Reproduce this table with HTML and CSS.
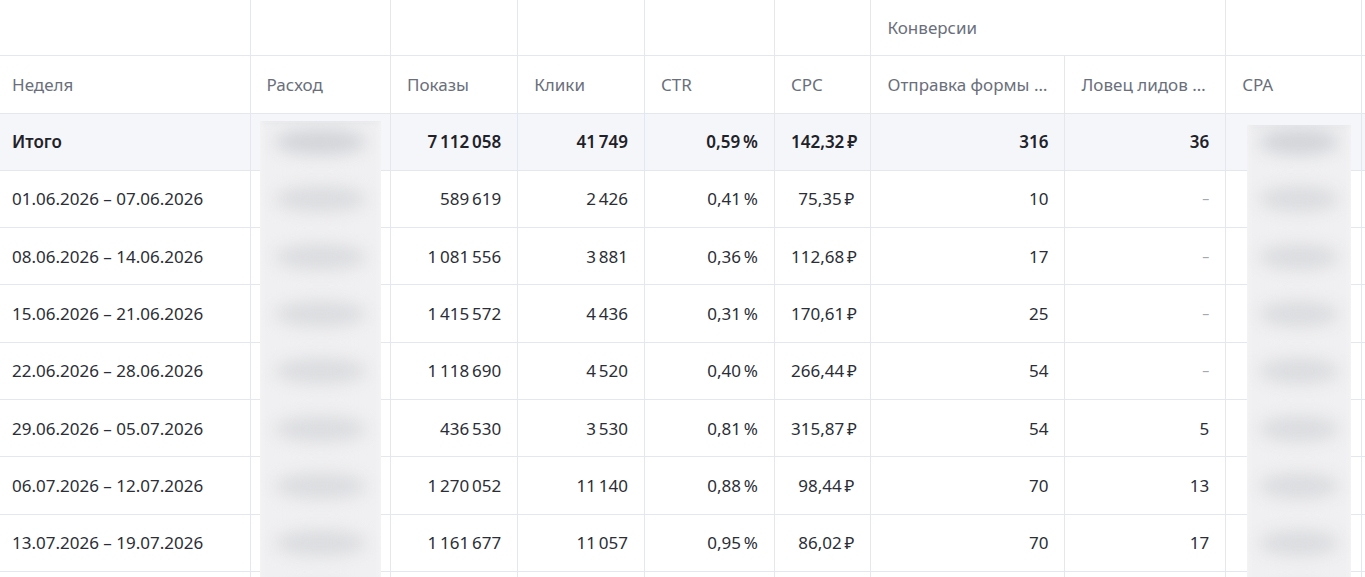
FILE: index.html
```html
<!DOCTYPE html>
<html lang="ru">
<head>
<meta charset="utf-8">
<title>Статистика по неделям</title>
<link rel="stylesheet" href="styles.css">
</head>
<body>
<div class="report">
  <table class="stats">
    <colgroup>
      <col class="c-week"><col class="c-spend"><col class="c-shows"><col class="c-clicks"><col class="c-ctr"><col class="c-cpc"><col class="c-form"><col class="c-leads"><col class="c-cpa"><col class="c-rest">
    </colgroup>
    <thead>
      <tr class="group">
        <th></th><th></th><th></th><th></th><th></th><th></th>
        <th colspan="2">Конверсии</th>
        <th></th><th></th>
      </tr>
      <tr class="head">
        <th>Неделя</th><th>Расход</th><th>Показы</th><th>Клики</th><th>CTR</th><th>CPC</th><th>Отправка формы …</th><th>Ловец лидов …</th><th>CPA</th><th></th>
      </tr>
    </thead>
    <tbody>
      <tr class="total">
        <td>Итого</td><td></td><td class="num">7&#8239;112&#8239;058</td><td class="num">41&#8239;749</td><td class="num">0,59&#8239;%</td><td class="num">142,32&#8239;₽</td><td class="num">316</td><td class="num">36</td><td></td><td></td>
      </tr>
      <tr>
        <td>01.06.2026 – 07.06.2026</td><td></td><td class="num">589&#8239;619</td><td class="num">2&#8239;426</td><td class="num">0,41&#8239;%</td><td class="num">75,35&#8239;₽</td><td class="num">10</td><td class="num empty">–</td><td></td><td></td>
      </tr>
      <tr>
        <td>08.06.2026 – 14.06.2026</td><td></td><td class="num">1&#8239;081&#8239;556</td><td class="num">3&#8239;881</td><td class="num">0,36&#8239;%</td><td class="num">112,68&#8239;₽</td><td class="num">17</td><td class="num empty">–</td><td></td><td></td>
      </tr>
      <tr>
        <td>15.06.2026 – 21.06.2026</td><td></td><td class="num">1&#8239;415&#8239;572</td><td class="num">4&#8239;436</td><td class="num">0,31&#8239;%</td><td class="num">170,61&#8239;₽</td><td class="num">25</td><td class="num empty">–</td><td></td><td></td>
      </tr>
      <tr>
        <td>22.06.2026 – 28.06.2026</td><td></td><td class="num">1&#8239;118&#8239;690</td><td class="num">4&#8239;520</td><td class="num">0,40&#8239;%</td><td class="num">266,44&#8239;₽</td><td class="num">54</td><td class="num empty">–</td><td></td><td></td>
      </tr>
      <tr>
        <td>29.06.2026 – 05.07.2026</td><td></td><td class="num">436&#8239;530</td><td class="num">3&#8239;530</td><td class="num">0,81&#8239;%</td><td class="num">315,87&#8239;₽</td><td class="num">54</td><td class="num">5</td><td></td><td></td>
      </tr>
      <tr>
        <td>06.07.2026 – 12.07.2026</td><td></td><td class="num">1&#8239;270&#8239;052</td><td class="num">11&#8239;140</td><td class="num">0,88&#8239;%</td><td class="num">98,44&#8239;₽</td><td class="num">70</td><td class="num">13</td><td></td><td></td>
      </tr>
      <tr>
        <td>13.07.2026 – 19.07.2026</td><td></td><td class="num">1&#8239;161&#8239;677</td><td class="num">11&#8239;057</td><td class="num">0,95&#8239;%</td><td class="num">86,02&#8239;₽</td><td class="num">70</td><td class="num">17</td><td></td><td></td>
      </tr>
      <tr>
        <td></td><td></td><td></td><td></td><td></td><td></td><td></td><td></td><td></td><td></td>
      </tr>
    </tbody>
  </table>

  <div class="mask mask-spend" aria-hidden="true">
    <div class="mask-rows">
      <span class="blob strong"></span><span class="blob"></span><span class="blob"></span><span class="blob"></span><span class="blob"></span><span class="blob"></span><span class="blob"></span><span class="blob"></span><span class="blob"></span>
    </div>
  </div>
  <div class="mask mask-cpa" aria-hidden="true">
    <div class="mask-rows">
      <span class="blob strong"></span><span class="blob"></span><span class="blob"></span><span class="blob"></span><span class="blob"></span><span class="blob"></span><span class="blob"></span><span class="blob"></span><span class="blob"></span>
    </div>
  </div>
</div>
</body>
</html>
```
FILE: styles.css
```css
html, body {
  margin: 0;
  padding: 0;
  background: #ffffff;
}

body {
  font-family: "Noto Sans", "Open Sans", "Liberation Sans", sans-serif;
  font-size: 17px;
  color: #2b2e36;
  overflow: hidden;
}

.report {
  position: relative;
  width: 1365px;
  height: 577px;
  overflow: hidden;
}

.stats {
  border-collapse: collapse;
  table-layout: fixed;
  width: 1560px;
}

.c-week { width: 250px; }
.c-spend { width: 140.5px; }
.c-shows { width: 127.2px; }
.c-clicks { width: 126.8px; }
.c-ctr { width: 130px; }
.c-cpc { width: 96.5px; }
.c-form { width: 194px; }
.c-leads { width: 160.7px; }
.c-cpa { width: 136px; }
.c-rest { width: 198.3px; }

.stats th,
.stats td {
  border: 1px solid #e5e7ee;
  padding: 0 16px;
  white-space: nowrap;
  overflow: visible;
  text-align: left;
  vertical-align: middle;
}

.stats tr > :first-child {
  border-left: none;
  padding-left: 12px;
}

.stats thead tr.group th {
  border-top: none;
}

.stats th {
  font-weight: 400;
  color: #6a6f7b;
}

tr.group { height: 55px; }
tr.head { height: 58px; }
.stats tbody tr { height: 57.3px; }

.stats td.num { text-align: right; }

tr.total td {
  background: #f5f6fa;
  font-weight: 600;
  color: #1f2229;
}

td.empty {
  color: #a4a8b1;
  font-size: 14px;
}

/* blurred hidden values */
.mask {
  position: absolute;
  overflow: hidden;
  background: #f0f0f2;
  box-shadow: inset 5px 0 7px -4px #f6f6f7, inset -5px 0 7px -4px #f6f6f7, inset 0 6px 8px -5px #e3e4e7;
}

.mask-spend {
  left: 260px;
  top: 121px;
  width: 121px;
  height: 460px;
}

.mask-cpa {
  left: 1247px;
  top: 125px;
  width: 104px;
  height: 460px;
}

.mask-rows {
  display: flex;
  flex-direction: column;
  align-items: center;
}

.mask-spend .mask-rows { margin-top: -7.5px; }
.mask-cpa .mask-rows { margin-top: -11.5px; }

.blob {
  display: flex;
  width: 100%;
  height: 57.3px;
  align-items: center;
  justify-content: center;
  flex-shrink: 0;
}

.blob::before {
  content: "";
  width: 76%;
  height: 26px;
  border-radius: 50%;
  background: #dbdcdf;
  filter: blur(8px);
}

.blob.strong::before {
  background: #d2d4d8;
}
```
